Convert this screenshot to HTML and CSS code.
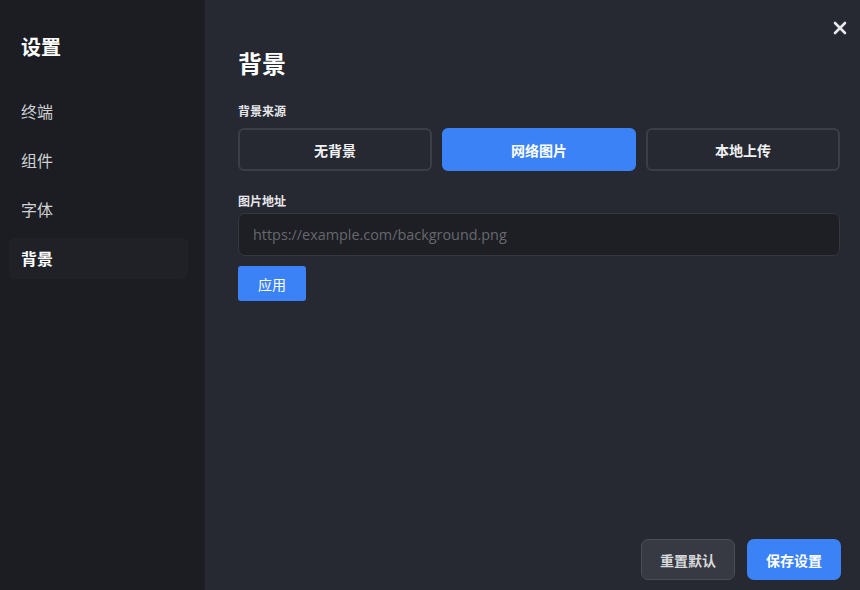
FILE: index.html
```html
<!DOCTYPE html>
<html lang="zh-CN">
<head>
    <meta charset="UTF-8">
    <title>设置</title>
    <link rel="stylesheet" href="styles.css">
</head>
<body>
    <div class="settings">
        <!-- 侧边栏 -->
        <aside class="sidebar">
            <h2 class="sidebar-title">设置</h2>
            <nav class="nav">
                <div class="nav-item">终端</div>
                <div class="nav-item">组件</div>
                <div class="nav-item">字体</div>
                <div class="nav-item active">背景</div>
            </nav>
        </aside>

        <!-- 内容区 -->
        <main class="content">
            <button class="close-btn">
                <svg width="14" height="14" viewBox="0 0 14 14" fill="none" stroke="currentColor" stroke-width="2.6" stroke-linecap="round">
                    <path d="M2 2l10 10M12 2L2 12"/>
                </svg>
            </button>

            <h1 class="page-title">背景</h1>

            <div class="field">
                <label class="field-label">背景来源</label>
                <div class="source-group">
                    <button class="source-btn">无背景</button>
                    <button class="source-btn selected">网络图片</button>
                    <button class="source-btn">本地上传</button>
                </div>
            </div>

            <div class="field">
                <label class="field-label tight">图片地址</label>
                <input type="text" class="text-input" placeholder="https://example.com/background.png">
                <button class="apply-btn">应用</button>
            </div>

            <div class="footer">
                <button class="btn btn-secondary">重置默认</button>
                <button class="btn btn-primary">保存设置</button>
            </div>
        </main>
    </div>
</body>
</html>
```

FILE: styles.css
```css
:root {
    --primary: #3b82f6;
    --sidebar-bg: #1c1d22;
    --main-bg: #262932;
    --text: #e6e7ea;
    --muted: #cfd1d5;
    --border: #3b3e47;
}

* {
    box-sizing: border-box;
}

body {
    margin: 0;
    background: var(--main-bg);
    color: var(--text);
    font-family: "Noto Sans CJK SC", "Noto Sans", sans-serif;
}

.settings {
    display: flex;
    width: 860px;
    height: 590px;
}

/* 侧边栏 */
.sidebar {
    width: 205px;
    flex-shrink: 0;
    background: var(--sidebar-bg);
    border-right: 1px solid #202228;
    padding: 30px 16px 0 9px;
}

.sidebar-title {
    margin: 0 0 27px 12px;
    font-size: 20px;
    font-weight: 700;
    line-height: 34px;
    color: #fff;
}

.nav {
    display: flex;
    flex-direction: column;
    gap: 8px;
}

.nav-item {
    height: 41px;
    line-height: 41px;
    padding-left: 12px;
    font-size: 16px;
    color: var(--muted);
    border-radius: 6px;
}

.nav-item.active {
    background: #202127;
    color: #fff;
    font-weight: 700;
}

/* 内容区 */
.content {
    position: relative;
    flex: 1;
    display: flex;
    flex-direction: column;
    padding: 42px 20px 10px 33px;
}

.close-btn {
    position: absolute;
    top: 20px;
    right: 12px;
    width: 16px;
    height: 16px;
    padding: 0;
    border: none;
    background: none;
    color: #e8e9ec;
    display: grid;
    place-items: center;
    cursor: pointer;
}

.page-title {
    margin: 0 0 18px;
    font-size: 24px;
    font-weight: 700;
    line-height: 42px;
    color: #fff;
}

.field {
    margin-bottom: 21px;
}

.field-label {
    display: block;
    font-size: 12px;
    font-weight: 700;
    line-height: 18px;
    margin-bottom: 8px;
    color: var(--text);
}

.field-label.tight {
    margin-bottom: 3px;
}

.source-group {
    display: grid;
    grid-template-columns: repeat(3, 1fr);
    gap: 10px;
}

.source-btn {
    height: 43px;
    background: transparent;
    border: 2px solid var(--border);
    border-radius: 6px;
    color: #f0f1f3;
    font-family: inherit;
    font-size: 14px;
    font-weight: 700;
    cursor: pointer;
}

.source-btn.selected {
    background: var(--primary);
    border-color: var(--primary);
    color: #fff;
}

.text-input {
    display: block;
    width: 100%;
    height: 43px;
    padding: 0 14px;
    background: #1e1f24;
    border: 1px solid #363840;
    border-radius: 7px;
    color: var(--text);
    font-family: "Open Sans", "Noto Sans", sans-serif;
    font-size: 14.4px;
    outline: none;
}

.text-input::placeholder {
    color: #66686e;
}

.apply-btn {
    margin-top: 10px;
    width: 68px;
    height: 35px;
    background: var(--primary);
    border: none;
    border-radius: 3px;
    color: #fff;
    font-family: inherit;
    font-size: 14px;
    cursor: pointer;
}

/* 底部按钮 */
.footer {
    margin-top: auto;
    display: flex;
    justify-content: flex-end;
    gap: 12px;
    margin-right: -1px;
}

.btn {
    width: 94px;
    height: 41px;
    border-radius: 7px;
    font-family: inherit;
    font-size: 14px;
    font-weight: 700;
    cursor: pointer;
}

.btn-secondary {
    background: #373a43;
    border: 1px solid #4b4e57;
    color: #d8d9dc;
}

.btn-primary {
    background: var(--primary);
    border: none;
    color: #fff;
}
```
